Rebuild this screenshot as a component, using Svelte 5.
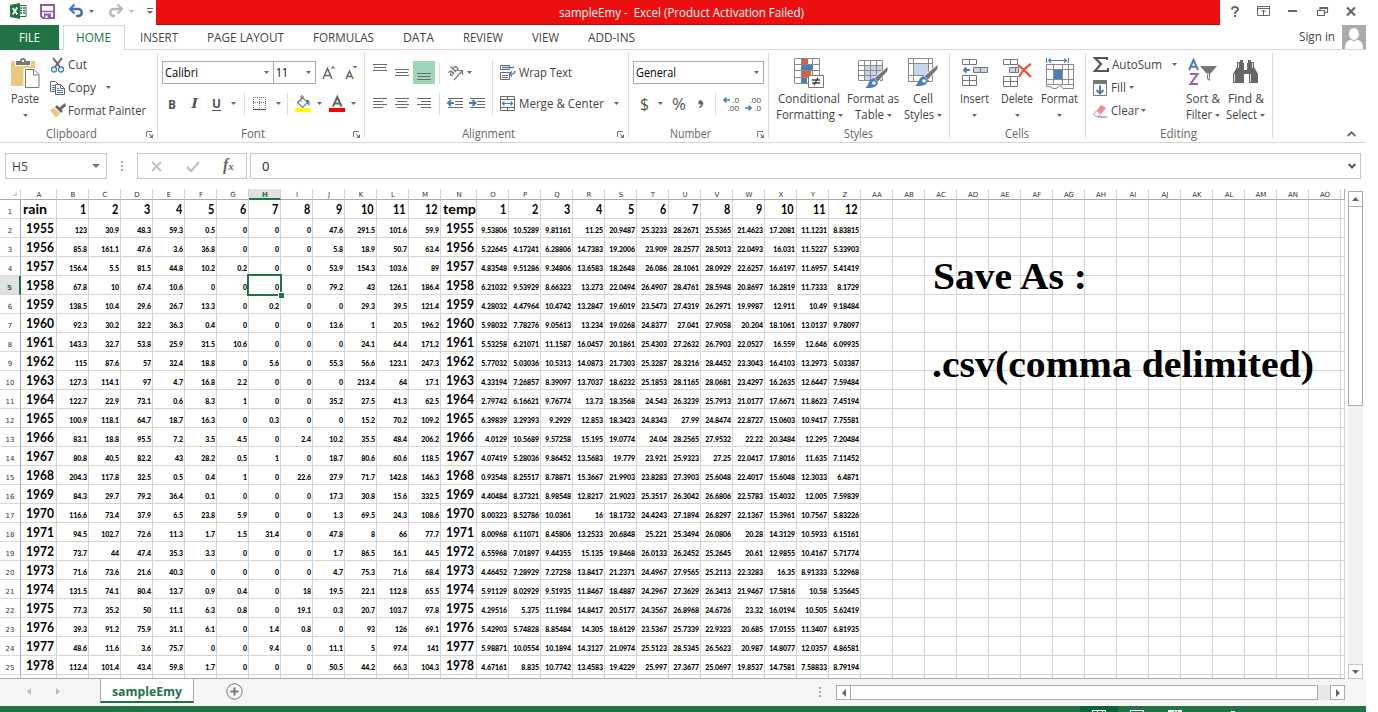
<script>
  // Stretches a text run to the width its slot calls for.
  function fit(el, width) {
    if (!width) return;
    const natural = el.getBoundingClientRect().width;
    el.style.transform = `scaleX(${width / natural})`;
    el.style.marginRight = `${width - natural}px`;
  }

  const G = '#6a6a6a';
  const B = '#4a7ebb';
  const lines = (y, spans) =>
    spans.map(([a, b], i) => `<path d="M${a} ${y + i * 3}.5H${b}" stroke="${G}"/>`).join('');

  const icons = {
    excel: [17, 16, `<path d="M9 2.500h7v11H9" fill="#fff" stroke="#217346"/><path d="M10 5h2m1 0h2M10 7.500h2m1 0h2M10 10h2m1 0h2" stroke="#217346" stroke-width="1.300"/><path d="M0 2l10-2v16L0 14z" fill="#217346"/><path d="M2.700 5l4.600 6.500M7.300 4.500L2.700 11.500" stroke="#fff" stroke-width="1.700"/>`],
    save: [15, 15, `<path d="M1 1h13v13H3l-2-2z" fill="#fff" stroke="#8a5bb0" stroke-width="2"/><path d="M2 7.500h11" stroke="#8a5bb0" stroke-width="1.500"/><path d="M4 9.500h7V14H4z" fill="#8a5bb0"/><path d="M5.500 11.500h2V14h-2z" fill="#fff"/>`],
    undo: [16, 14, `<path d="M2 5h8c5 0 5 7 0 7H8" fill="none" stroke="#41719c" stroke-width="2.400"/><path d="M6.500 .5L2 5l4.500 4.500" fill="none" stroke="#3f7cbf" stroke-width="2.200"/>`],
    redo: [16, 14, `<path d="M14 5H6C1 5 1 12 6 12h1" fill="none" stroke="#b8b8b8" stroke-width="2.400"/><path d="M9.500 .5L14 5 9.500 9.500" fill="none" stroke="#b8b8b8" stroke-width="2.200"/>`],
    custom: [6, 6, `<path d="M0 .5h6" stroke="#666"/><path d="M0 3h6L3 6z" fill="#666"/>`],
    arrow: [5, 3, `<path d="M0 0h5L2.500 3z" fill="#6a6a6a"/>`],
    arrowDim: [5, 3, `<path d="M0 0h5L2.500 3z" fill="#b5b5b5"/>`],
    arrowBig: [8, 4, `<path d="M0 0h8L4 4z" fill="#777"/>`],
    help: [8, 11, `<path d="M1 3.500C1 .3 7 .3 7 3.300 7 5.500 4 5 4 8" fill="none" stroke="#666" stroke-width="2"/><path d="M3 9h2v2H3z" fill="#666"/>`],
    ribbonOpt: [13, 10, `<path d="M.5 .5h12v9H.5zM.5 2.500h12M6.500 9V4M4.500 6l2-2 2 2" fill="none" stroke="#666"/>`],
    min: [9, 2, `<path d="M0 1h9" stroke="#666" stroke-width="2"/>`],
    restore: [11, 9, `<path d="M.5 3.500h7v5h-7zM3 3V.5h7.500v5H8M3 1.500h7" fill="none" stroke="#666" stroke-width="1.200"/>`],
    close: [10, 9, `<path d="M1 .5l8 8M9 .5l-8 8" stroke="#666" stroke-width="2.200"/>`],
    avatar: [24, 24, `<path d="M0 0h24v24H0z" fill="#ababab"/><path d="M3 24c0-7 3-9 6-9h6c3 0 6 2 6 9z" fill="#fff"/><ellipse cx="12" cy="9" rx="5.500" ry="6.500" fill="#fff" stroke="#ababab"/>`],
    paste: [29, 31, `<path d="M0 3h24v25H0z" fill="#ecc780"/><path d="M4 3h16v5H4z" fill="#fff"/><path d="M5 3h4c0-4 6-4 6 0h4v4H5z" fill="#777"/><circle cx="12" cy="3" r="1.200" fill="#fff"/><path d="M14 11.500h9l5 5v13H14z" fill="#fff" stroke="#fff" stroke-width="3"/><path d="M14.500 11.500h8.500l5 5v13H14.500zM22.500 12v5h5" fill="#fff" stroke="#777"/>`],
    cut: [16, 16, `<path d="M3 1l7 9M12 1L5 10" stroke="#666" stroke-width="2"/><circle cx="4" cy="12.500" r="2.500" fill="none" stroke="${B}" stroke-width="1.300"/><circle cx="11" cy="12.500" r="2.500" fill="none" stroke="${B}" stroke-width="1.300"/>`],
    copy: [16, 14, `<path d="M.5 .5h5l3 3v7h-8z" fill="#fff" stroke="#666"/><path d="M2 4.500h3M2 6.500h3M2 8.500h3" stroke="${B}"/><path d="M5.500 3.500h5l4 4v6h-9z" fill="#fff" stroke="#666"/><path d="M10.500 4v3.500h4" fill="none" stroke="#666"/><path d="M7 7.500h2M7 9.500h6M7 11.500h6" stroke="${B}"/>`],
    painter: [17, 15, `<path d="M0 7l4-2 6 5-4 5z" fill="#ecc780"/><path d="M5 4l2-2 6 6-2 2z" fill="#666"/><path d="M9 5l6-5 1 3-5 4z" fill="#666"/>`],
    grow: [14, 16, `<path d="M1 14L5.500 3.500 10 14M2.700 10.500h5.600" fill="none" stroke="#666" stroke-width="1.500"/><path d="M8.500 3.500h5L11 1z" fill="${B}"/>`],
    shrink: [13, 16, `<path d="M1 14L4.500 6 8 14M2.300 11.500h4.400" fill="none" stroke="#666" stroke-width="1.500"/><path d="M7.500 1h5L10 3.500z" fill="${B}"/>`],
    border: [13, 13, `<path d="M.5 0v11M12.500 0v11M6.500 0v11M0 .5h13M0 5.500h13" stroke="#777" stroke-dasharray="1 1"/><path d="M0 12.500h13" stroke="#555" stroke-width="1.200"/>`],
    fill: [17, 17, `<path d="M2.500 7.500l5-5 5 5-5 5z" fill="#fff" stroke="#777" stroke-width="1.200"/><path d="M6 7V1h2v3" fill="none" stroke="#777"/><path d="M11 5c4-1 4 3 3 6l-2-3z" fill="${B}"/><path d="M0 13h16v4H0z" fill="#ff0"/>`],
    fontColor: [16, 17, `<path d="M4 11.500L8.300 2 12.600 11.500M5.500 8.500h5.600" fill="none" stroke="#666" stroke-width="2"/><path d="M0 13h16v4H0z" fill="#f00"/>`],
    aTop: [14, 24, lines(3, [[0, 14], [1, 13], [0, 14]])],
    aMid: [14, 24, lines(8, [[0, 14], [1, 13], [0, 14]])],
    aBot: [22, 23, `<path d="M0 0h22v23H0z" fill="#9fd5b7"/>` + lines(12, [[4, 18], [5, 17], [4, 18]])],
    aLeft: [14, 11, lines(0, [[0, 14], [0, 10], [0, 14], [0, 10]])],
    aCenter: [14, 11, lines(0, [[0, 14], [2, 12], [0, 14], [2, 12]])],
    aRight: [14, 11, lines(0, [[0, 14], [4, 14], [0, 14], [4, 14]])],
    orient: [17, 16, `<text x="0" y="0" transform="translate(4 12) rotate(-45)" font-size="10" font-weight="600" font-family="Open Sans" fill="#666">ab</text><path d="M7 15l8-9M11 5.500h4.500v4.500" fill="none" stroke="#777" stroke-width="1.200"/>`],
    dedent: [16, 11, `<path d="M1 .5h15M8 3.500h8M8 6.500h8M1 9.500h15" stroke="${G}"/><path d="M7 5H2M4 2l-3 3 3 3" fill="none" stroke="${B}" stroke-width="2"/>`],
    indent: [16, 11, `<path d="M1 .5h15M8 3.500h8M8 6.500h8M1 9.500h15" stroke="${G}"/><path d="M0 5h6M3.500 2l3 3-3 3" fill="none" stroke="${B}" stroke-width="2"/>`],
    wrap: [16, 16, `<path d="M.5 .5h9v4h-9zM.5 7.500h9v7h-9zM2 10.500h6M2 12.500h6" fill="none" stroke="${G}"/><path d="M2 2.500h12M15 6c0 3-2 3-5 3M12 6.500L9.500 9l2.500 2.500" fill="none" stroke="${B}" stroke-width="1.400"/>`],
    merge: [15, 15, `<path d="M.5 .5h14v14H.5zM.5 3.500h14M.5 11.500h14M7.500 0v3.500M7.500 11.500V15" fill="none" stroke="${G}"/><path d="M2 7.500h11M4.500 5.500l-2 2 2 2M10.500 5.500l2 2-2 2" fill="none" stroke="${B}" stroke-width="1.200"/>`],
    comma: [6, 8, `<circle cx="2.500" cy="2.500" r="2.200" fill="#666"/><path d="M4.700 2.500C5 5 3.500 6.500 1 7.500" fill="none" stroke="#666" stroke-width="1.300"/>`],
    cond: [30, 30, `<path d="M.5 .5h25v25H.5zM.5 6.500h25M.5 12.500h25M.5 19.500h25M7.500 0v25M18.500 0v25" fill="#fff" stroke="#8a8a8a"/><path d="M8 1h6v5H8zM8 13h9v6H8z" fill="#d9603f"/><path d="M8 7h11v5H8zM8 20h5v5H8z" fill="${B}"/><path d="M14.500 17.500h15v12h-15z" fill="#fff" stroke="#777"/><path d="M18 22h8M18 25h8M24 19.500l-4 8" stroke="#444" stroke-width="1.300"/>`],
    tableFmt: [30, 30, `<path d="M.5 2.500h24v20H.5z" fill="#fff"/><path d="M7 8h18v15H7z" fill="#c5d5ea"/><path d="M.5 2.500h24v20H.5zM.5 7.500h24M.5 12.500h24M.5 17.500h24M6.500 2v20M12.500 2v20M18.500 2v20" fill="none" stroke="#8a8a8a"/><path d="M30 8v5l-10 11-4-4z" fill="#777" stroke="#fff"/><path d="M16 20l4 4c-1 6-6 6-13 6 4-2 3-9 9-10z" fill="${B}"/><circle cx="16" cy="25" r="1.800" fill="#fff"/>`],
    cellFmt: [30, 30, `<path d="M.5 .5h24v23H.5zM.5 5.500h24M.5 17.500h24M5.500 0v23M20.500 0v23" fill="#fff" stroke="#8a8a8a"/><path d="M6 6h14v11H6z" fill="#c5d5ea"/><path d="M30 6v5L20 22l-4-4z" fill="#777" stroke="#fff"/><path d="M16 18l4 4c-1 6-6 6-13 6 4-2 3-9 9-10z" fill="${B}"/><circle cx="16" cy="23" r="1.800" fill="#fff"/>`],
    insert: [28, 30, `<path d="M1.500 1.500h14v5h-14zM8.500 1v5M1.500 17.500h14v10h-14zM1.500 22.500h14M8.500 17v10" fill="#fff" stroke="#777"/><path d="M12.500 9.500h14v5h-14zM19.500 9v6" fill="#c5d5ea" stroke="#777"/><path d="M9 12H3M5.500 9.500L3 12l2.500 2.500" fill="none" stroke="${B}" stroke-width="2"/>`],
    del: [30, 30, `<path d="M1.500 1.500h14v5h-14zM8.500 1v5M1.500 18.500h14v10h-14zM1.500 23.500h14M8.500 18v10" fill="#fff" stroke="#777"/><path d="M7.500 9.500h9v5h-9zM13.500 9v6" fill="#c5d5ea" stroke="#777"/><path d="M16 7c4 3 9 8 13 12M29 6c-5 3-9 7-12 13" fill="none" stroke="#d9603f" stroke-width="2.400"/>`],
    format: [28, 31, `<path d="M.5 0v5M22.500 0v5M2 2.500h19M5 .5l-2.500 2L5 4.500M18 .5l2.500 2-2.500 2" fill="none" stroke="${B}" stroke-width="1.200"/><path d="M.5 6.500h27v24H17l-2-3-5 3H7l-3-2H.5zM.5 11.500h27M.5 21.500h27M.5 26.500h27M7.500 7v20M16.500 7v20M22.500 7v20" fill="#fff" stroke="#8a8a8a"/><path d="M8 12h8v9H8z" fill="${B}"/>`],
    sum: [16, 15, `<path d="M14 3V1H2l6 6-6 7h13v-3" fill="none" stroke="#555" stroke-width="2.200"/>`],
    fillDown: [14, 16, `<path d="M.5 .5h13v15H.5z" fill="#fff" stroke="#777"/><path d="M0 0h14v4H0z" fill="#777"/><path d="M7 5.500v8M3.500 10L7 13.500 10.500 10" fill="none" stroke="${B}" stroke-width="2"/>`],
    clear: [15, 14, `<path d="M8 1l5 3-5 6-4-4z" fill="#e98a9a"/><path d="M3.500 6.500l4 4-2 2H2.500L1 10z" fill="#fff" stroke="#e98a9a"/><path d="M5 13h9" stroke="#777"/>`],
    sort: [30, 30, `<path d="M1 12L5.500 2 10 12M2.700 8.800h5.600" fill="none" stroke="${B}" stroke-width="2"/><path d="M2 16h7.500L2.500 26H10" fill="none" stroke="#9161b5" stroke-width="2"/><path d="M12 8h17l-7 8v7l-3-2v-5z" fill="#777"/><path d="M20 15l1 6" stroke="#fff"/>`],
    find: [28, 28, `<path d="M5 3h3V1h3v3h1v7h3V4h1V1h3v2h3v5l4 7v9h-9v-9h-5v9H1v-9l4-7z" fill="#666"/><path d="M2.500 15v8M18.500 15v8M6.500 4v5M20.500 4v5M12 8.500h4" stroke="#fff" opacity=".8"/>`],
    launch: [7, 7, `<path d="M.5 6V.5H6M3 3l3 3" fill="none" stroke="#777"/><path d="M7 3v4H3z" fill="#777"/>`],
    up: [9, 6, `<path d="M.7 5L4.500 1.300 8.300 5" fill="none" stroke="#666" stroke-width="1.800"/>`],
    down: [8, 6, `<path d="M.7 1L4 4.500 7.300 1" fill="none" stroke="#555" stroke-width="2"/>`],
    dots: [2, 10, `<path d="M0 0h2v2H0zM0 4h2v2H0zM0 8h2v2H0z" fill="#aaa"/>`],
    cancel: [11, 11, `<path d="M1 1l9 9M10 1l-9 9" stroke="#c2c2c2" stroke-width="1.800"/>`],
    ok: [14, 11, `<path d="M1 6l4 4L13 1" fill="none" stroke="#c2c2c2" stroke-width="2.300"/>`],
    triUp: [7, 4, `<path d="M0 4h7L3.500 0z" fill="#666"/>`],
    triDown: [7, 4, `<path d="M0 0h7L3.500 4z" fill="#666"/>`],
    triLeft: [4, 8, `<path d="M4 0v8L0 4z" fill="#666"/>`],
    triRight: [4, 8, `<path d="M0 0v8l4-4z" fill="#666"/>`],
    navLeft: [4, 7, `<path d="M4 0v7L0 3.500z" fill="#bbb"/>`],
    navRight: [4, 7, `<path d="M0 0v7l4-3.500z" fill="#bbb"/>`],
    add: [17, 17, `<circle cx="8.500" cy="8.500" r="7.700" fill="none" stroke="#777"/><path d="M8.500 4.500v8M4.500 8.500h8" stroke="#777" stroke-width="2"/>`],
    corner: [4, 4, `<path d="M4 0v4H0z" fill="#c8c8c8"/>`],
    shiftLeft: [7, 6, `<path d="M7 3H1.500M3.500 .6L1 3l2.500 2.400" fill="none" stroke="${B}" stroke-width="1.600"/>`],
    shiftRight: [7, 6, `<path d="M0 3h5.500M3.500 .6L6 3 3.500 5.400" fill="none" stroke="${B}" stroke-width="1.600"/>`]
  };

  // Slots tile a row from left to right: [slot width, kind, value, text width].
  const quick = [[10], [30, 'i', 'excel'], [28, 'i', 'save'], [21, 'i', 'undo'], [19, 'i', 'arrow'], [21, 'i', 'redo'], [18, 'i', 'arrowDim'], [8, 'i', 'custom']];
  const windowTools = [[11], [26, 'i', 'help'], [31, 'i', 'ribbonOpt'], [29, 'i', 'min'], [29, 'i', 'restore'], [20, 'i', 'close']];
  const tabs = [[15], [67, 't', 'INSERT', 38], [106, 't', 'PAGE LAYOUT', 77], [90, 't', 'FORMULAS', 61], [60, 't', 'DATA', 31], [69, 't', 'REVIEW', 40], [56, 't', 'VIEW', 27], [60, 't', 'ADD-INS', 47]];

  const clip = [
    [[18, 'i', 'cut'], [60, 't', 'Cut', 19]],
    [[18, 'i', 'copy'], [38, 't', 'Copy', 28], [8, 'i', 'arrow']],
    [[18, 'i', 'painter'], [80, 't', 'Format Painter', 78]]
  ];
  const fontRow = [[10], [23, 'b', 'B', 8], [21, 'it', 'I', 7], [19, 'u', 'U', 9], [13, 'i', 'arrow'], [9, 's'], [23, 'i', 'border'], [11, 'i', 'arrow'], [8, 's'], [22, 'i', 'fill'], [12, 'i', 'arrow'], [22, 'i', 'fontColor'], [6, 'i', 'arrow']];
  const alignRows = [
    [[8], [22, 'i', 'aTop'], [18, 'i', 'aMid'], [26, 'i', 'aBot'], [8, 's'], [20, 'i', 'orient'], [25, 'i', 'arrow'], [8, 'st'], [19, 'i', 'wrap'], [60, 't', 'Wrap Text', 53]],
    [[8], [22, 'i', 'aLeft'], [22, 'i', 'aCenter'], [22, 'i', 'aRight'], [8, 's'], [22, 'i', 'dedent'], [23, 'i', 'indent'], [8, 'sb'], [19, 'i', 'merge'], [95, 't', 'Merge & Center', 85], [6, 'i', 'arrow']]
  ];
  const numberRow = [[11], [18, 'big', '$', 9], [14, 'i', 'arrow'], [26, 'big', '%', 14], [17, 'i', 'comma'], [8, 's'], [22, 'dl', 'inc'], [17, 'dr', 'dec']];
  const edit = [
    [[19, 'i', 'sum'], [60, 't', 'AutoSum', 50], [8, 'i', 'arrow']],
    [[18, 'i', 'fillDown'], [18, 't', 'Fill', 15], [8, 'i', 'arrow']],
    [[18, 'i', 'clear'], [30, 't', 'Clear', 28], [8, 'i', 'arrow']]
  ];
  const big = {
    paste: [50, 'paste', 'Paste', 28, '', 0],
    styles: [[72, 'cond', 'Conditional', 62, 'Formatting', 59], [56, 'tableFmt', 'Format as', 52, 'Table', 29], [44, 'cellFmt', 'Cell', 20, 'Styles', 30]],
    cells: [[43, 'insert', 'Insert', 29, '', 0], [42, 'del', 'Delete', 32, '', 0], [43, 'format', 'Format', 37, '', 0]],
    editing: [[43, 'sort', 'Sort &', 34, 'Filter', 26], [43, 'find', 'Find &', 36, 'Select', 31]]
  };

  const letters = 'ABCDEFGHIJKLMNOPQRSTUVWXYZ'.split('');
  const columns = [...letters, ...letters.slice(0, 15).map((l) => 'A' + l)];

  const data = `rain 1 2 3 4 5 6 7 8 9 10 11 12 temp 1 2 3 4 5 6 7 8 9 10 11 12
1955 123 30.9 48.3 59.3 0.5 0 0 0 47.6 291.5 101.6 59.9 1955 9.53806 10.5289 9.81161 11.25 20.9487 25.3233 28.2671 25.5365 21.4623 17.2081 11.1231 8.83815
1956 85.8 161.1 47.6 3.6 36.8 0 0 0 5.8 18.9 50.7 63.4 1956 5.22645 4.17241 6.28806 14.7383 19.2006 23.909 28.2577 28.5013 22.0493 16.031 11.5227 5.33903
1957 156.4 5.5 81.5 44.8 10.2 0.2 0 0 53.9 154.3 103.6 89 1957 4.83548 9.51286 9.34806 13.6583 18.2648 26.086 28.1061 28.0929 22.6257 16.6197 11.6957 5.41419
1958 67.8 10 67.4 10.6 0 0 0 0 79.2 43 126.1 186.4 1958 6.21032 9.53929 8.66323 13.273 22.0494 26.4907 28.4761 28.5948 20.8697 16.2819 11.7333 8.1729
1959 138.5 10.4 29.6 26.7 13.3 0 0.2 0 0 29.3 39.5 121.4 1959 4.28032 4.47964 10.4742 13.2847 19.6019 23.5473 27.4319 26.2971 19.9987 12.911 10.49 9.18484
1960 92.3 30.2 32.2 36.3 0.4 0 0 0 13.6 1 20.5 196.2 1960 5.98032 7.78276 9.05613 13.234 19.0268 24.8377 27.041 27.9058 20.204 18.1061 13.0137 9.78097
1961 143.3 32.7 53.8 25.9 31.5 10.6 0 0 0 24.1 64.4 171.2 1961 5.53258 6.21071 11.1587 16.0457 20.1861 25.4303 27.2632 26.7903 22.0527 16.559 12.646 6.09935
1962 115 87.6 57 32.4 18.8 0 5.6 0 55.3 56.6 123.1 247.3 1962 5.77032 5.03036 10.5313 14.0873 21.7303 25.3287 28.3216 28.4452 23.3043 16.4103 13.2973 5.03387
1963 127.3 114.1 97 4.7 16.8 2.2 0 0 0 213.4 64 17.1 1963 4.33194 7.26857 8.39097 13.7037 18.6232 25.1853 28.1165 28.0681 23.4297 16.2635 12.6447 7.59484
1964 122.7 22.9 73.1 0.6 8.3 1 0 0 35.2 27.5 41.3 62.5 1964 2.79742 6.16621 9.76774 13.73 18.3568 24.543 26.3239 25.7913 21.0177 17.6671 11.8623 7.45194
1965 100.9 118.1 64.7 18.7 16.3 0 0.3 0 0 15.2 70.2 109.2 1965 6.39839 3.29393 9.2929 12.853 18.3423 24.8343 27.99 24.8474 22.8727 15.0603 10.9417 7.75581
1966 83.1 18.8 95.5 7.2 3.5 4.5 0 2.4 10.2 35.5 48.4 206.2 1966 4.0129 10.5689 9.57258 15.195 19.0774 24.04 28.2565 27.9532 22.22 20.3484 12.295 7.20484
1967 80.8 40.5 82.2 43 28.2 0.5 1 0 18.7 80.6 60.6 118.5 1967 4.07419 5.28036 9.86452 13.5683 19.779 23.921 25.9323 27.25 22.0417 17.8016 11.635 7.11452
1968 204.3 117.8 32.5 0.5 0.4 1 0 22.6 27.9 71.7 142.8 146.3 1968 0.93548 8.25517 8.78871 15.3667 21.9903 23.8283 27.3903 25.6048 22.4017 15.6048 12.3033 6.4871
1969 84.3 29.7 79.2 36.4 0.1 0 0 0 17.3 30.8 15.6 332.5 1969 4.40484 8.37321 8.98548 12.8217 21.9023 25.3517 26.3042 26.6806 22.5783 15.4032 12.005 7.59839
1970 116.6 73.4 37.9 6.5 23.8 5.9 0 0 1.3 69.5 24.3 108.6 1970 8.00323 8.52786 10.0361 16 18.1732 24.4243 27.1894 26.8297 22.1367 15.3961 10.7567 5.83226
1971 94.5 102.7 72.6 11.3 1.7 1.5 31.4 0 47.8 8 66 77.7 1971 8.00968 6.11071 8.45806 13.2533 20.6848 25.221 25.3494 26.0806 20.28 14.3129 10.5933 6.15161
1972 73.7 44 47.4 35.3 3.3 0 0 0 1.7 86.5 16.1 44.5 1972 6.55968 7.01897 9.44355 15.135 19.8468 26.0133 26.2452 25.2645 20.61 12.9855 10.4167 5.71774
1973 71.6 73.6 21.6 40.3 0 0 0 0 4.7 75.3 71.6 68.4 1973 4.46452 7.28929 7.27258 13.8417 21.2371 24.4967 27.9565 25.2113 22.3283 16.35 8.91333 5.32968
1974 131.5 74.1 80.4 13.7 0.9 0.4 0 18 19.5 22.1 112.8 65.5 1974 5.91129 8.02929 9.51935 11.8467 18.4887 24.2967 27.3629 26.3413 21.9467 17.5816 10.58 5.35645
1975 77.3 35.2 50 11.1 6.3 0.8 0 19.1 0.3 20.7 103.7 97.8 1975 4.29516 5.375 11.1984 14.8417 20.5177 24.3567 26.8968 24.6726 23.32 16.0194 10.505 5.62419
1976 39.3 91.2 75.9 31.1 6.1 0 1.4 0.8 0 93 126 69.1 1976 5.42903 5.74828 8.85484 14.305 18.6129 23.5367 25.7339 22.9323 20.685 17.0155 11.3407 6.81935
1977 48.6 11.6 3.6 75.7 0 0 9.4 0 11.1 5 97.4 141 1977 5.98871 10.0554 10.1894 14.3127 21.0974 25.5123 28.5345 26.5623 20.987 14.8077 12.0357 4.86581
1978 112.4 101.4 43.4 59.8 1.7 0 0 0 50.5 44.2 66.3 104.3 1978 4.67161 8.835 10.7742 13.4583 19.4229 25.997 27.3677 25.0697 19.8537 14.7581 7.58833 8.79194`;
  const rows = data.split('\n').map((r) => r.split(' '));
  const isYear = (i) => i === 0 || i === 13;
  const largeWidth = (text, r, i) =>
    text === 'rain' ? 24 : text === 'temp' ? 33 : isYear(i) && r > 0 ? 28 : text.length * 6.3;
</script>

{#snippet icon(name)}
  <svg class="icon" width={icons[name][0]} height={icons[name][1]} viewBox="0 0 {icons[name][0]} {icons[name][1]}">{@html icons[name][2]}</svg>
{/snippet}

{#snippet slots(list)}
  {#each list as [w, kind, value, tw]}
    <span class="slot k-{kind ?? 'gap'}" style:width="{w}px">
      {#if kind === 'i'}{@render icon(value)}
      {:else if kind === 'dl'}<span class="dec"><span>{@render icon('shiftLeft')}.0</span><span class="end">.00</span></span>
      {:else if kind === 'dr'}<span class="dec"><span class="end">.00</span><span>{@render icon('shiftRight')}.0</span></span>
      {:else if value}<span class="txt" use:fit={tw}>{value}</span>{/if}
    </span>
  {/each}
{/snippet}

{#snippet bigButton([w, name, line1, w1, line2, w2])}
  <div class="big" style:width="{w}px">
    <div class="pic">{@render icon(name)}</div>
    <div class="line"><span class="txt" use:fit={w1}>{line1}</span></div>
    <div class="line">{#if line2}<span class="txt" use:fit={w2}>{line2}</span>{/if}<span class="caret" class:after={line2}>{@render icon('arrow')}</span></div>
  </div>
{/snippet}

{#snippet label(text, w, launcher)}
  <div class="label"><span class="txt" use:fit={w}>{text}</span>{#if launcher}<span class="launcher">{@render icon('launch')}</span>{/if}</div>
{/snippet}

<div class="window">
  <header class="title">
    <div class="quick">{@render slots(quick)}</div>
    <div class="caption"><span class="txt" use:fit={245}>sampleEmy -&nbsp; Excel (Product Activation Failed)</span></div>
    <div class="tools">{@render slots(windowTools)}</div>
  </header>

  <nav class="tabs">
    <div class="file"><span class="txt" use:fit={21}>FILE</span></div>
    <div class="home"><span class="txt" use:fit={35}>HOME</span></div>
    <div class="others">{@render slots(tabs)}</div>
    <div class="sign"><span class="txt" use:fit={36}>Sign in</span>{@render icon('avatar')}</div>
  </nav>

  <section class="ribbon">
    <div class="group g-clip">
      <div class="body">
        {@render bigButton(big.paste)}
        <div class="stack">{#each clip as row}<div class="row short">{@render slots(row)}</div>{/each}</div>
      </div>
      {@render label('Clipboard', 51, true)}
    </div>
    <div class="group g-font">
      <div class="body rows">
        <div class="row">
          <div class="combo family"><span class="txt" use:fit={33}>Calibri</span>{@render icon('arrow')}</div>
          <div class="combo size"><span class="txt" use:fit={12}>11</span>{@render icon('arrow')}</div>
          <div class="sizer">{@render icon('grow')}{@render icon('shrink')}</div>
        </div>
        <div class="row">{@render slots(fontRow)}</div>
      </div>
      {@render label('Font', 24, true)}
    </div>
    <div class="group g-align">
      <div class="body rows">{#each alignRows as row}<div class="row">{@render slots(row)}</div>{/each}</div>
      {@render label('Alignment', 53, true)}
    </div>
    <div class="group g-number">
      <div class="body rows">
        <div class="row"><div class="combo general"><span class="txt" use:fit={40}>General</span>{@render icon('arrow')}</div></div>
        <div class="row">{@render slots(numberRow)}</div>
      </div>
      {@render label('Number', 41, true)}
    </div>
    <div class="group g-styles">
      <div class="body">{#each big.styles as b}{@render bigButton(b)}{/each}</div>
      {@render label('Styles', 29, false)}
    </div>
    <div class="group g-cells">
      <div class="body">{#each big.cells as b}{@render bigButton(b)}{/each}</div>
      {@render label('Cells', 24, false)}
    </div>
    <div class="group g-edit">
      <div class="body">
        <div class="stack">{#each edit as row}<div class="row short">{@render slots(row)}</div>{/each}</div>
        {#each big.editing as b}{@render bigButton(b)}{/each}
      </div>
      {@render label('Editing', 37, false)}
    </div>
    <div class="collapse">{@render icon('up')}</div>
  </section>

  <section class="formula">
    <div class="box name"><span class="txt" use:fit={16}>H5</span>{@render icon('arrowBig')}</div>
    <div class="grip">{@render icon('dots')}</div>
    <div class="box actions">{@render icon('cancel')}{@render icon('ok')}<span class="fx">f<small>x</small></span></div>
    <div class="box value"><span>0</span>{@render icon('down')}</div>
  </section>

  <main class="sheet">
    <div class="grid">
      <div class="ch corner">{@render icon('corner')}</div>
      {#each columns as c}<div class="ch" class:on={c === 'H'}>{c}</div>{/each}
      <div class="ch last"></div>
      {#each rows as row, r}
        <div class="rh" class:on={r === 4}>{r + 1}</div>
        {#each columns as c, i}
          <div class="cell" class:large={r === 0 || isYear(i)} class:word={r === 0 && isYear(i)}>
            {#if row[i] && (r === 0 || isYear(i))}<span class="txt" use:fit={largeWidth(row[i], r, i)}>{row[i]}</span>{:else}{row[i] ?? ''}{/if}
            {#if r === 4 && c === 'H'}<div class="cursor"></div>{/if}
          </div>
        {/each}
        <div class="cell"></div>
      {/each}
      <div class="rh tail"></div>
      {#each columns as c}<div class="cell tail"></div>{/each}
      <div class="cell tail"></div>
      <div class="note save"><span class="txt" use:fit={154}>Save As :</span></div>
      <div class="note csv"><span class="txt" use:fit={382}>.csv(comma delimited)</span></div>
    </div>
    <div class="vscroll">
      <div class="sb">{@render icon('triUp')}</div>
      <div class="vthumb"></div>
      <div class="vtrack"></div>
      <div class="sb light">{@render icon('triDown')}</div>
    </div>
  </main>

  <footer class="sheets">
    <div class="nav">{@render icon('navLeft')}{@render icon('navRight')}</div>
    <div class="tab"><span class="txt" use:fit={70}>sampleEmy</span></div>
    <div class="plus">{@render icon('add')}</div>
    <div class="hgrip">{@render icon('dots')}</div>
    <div class="hscroll">
      <div class="sb">{@render icon('triLeft')}</div>
      <div class="hthumb"></div>
      <div class="htrack"></div>
      <div class="sb">{@render icon('triRight')}</div>
    </div>
  </footer>
  <div class="status">
    <div class="view"><i></i></div>
    <div class="view plain"><i></i></div>
    <div class="view plain"><i class="solid"></i></div>
    <b></b>
  </div>
</div>

<style>
  :global(body) { margin: 0; background: #fff; overflow: hidden; }
  .window { width: 1366px; height: 712px; display: flex; flex-direction: column; overflow: hidden; font: 12px/16px 'Open Sans', sans-serif; color: #444; }
  .window :global(*) { box-sizing: border-box; }
  .icon { display: block; flex: none; overflow: visible; }
  .txt { display: inline-block; white-space: pre; transform-origin: left center; flex: none; }
  .slot { flex: none; display: flex; align-items: center; height: 100%; white-space: nowrap; }
  .k-b { font-weight: 700; font-size: 13px; color: #555; }
  .k-it { font: italic 700 15px 'Liberation Serif', serif; color: #555; }
  .k-u { font-weight: 700; font-size: 13px; color: #555; }
  .k-u .txt { border-bottom: 1px solid #555; line-height: 13px; }
  .k-big { font-size: 16px; color: #555; }
  .k-s, .k-st, .k-sb { border-left: 1px solid #dcdcdc; height: 22px; }
  .k-st { height: 28px; align-self: flex-end; }
  .k-sb { height: 27px; align-self: flex-start; }
  .dec { display: flex; flex-direction: column; width: 16px; font-size: 8px; line-height: 8px; color: #444; }
  .dec span { display: flex; align-items: center; justify-content: space-between; height: 8px; }
  .dec .end { justify-content: flex-end; }

  .title { height: 25px; display: flex; flex: none; }
  .quick { width: 156px; height: 22px; display: flex; }
  .caption { width: 1064px; height: 25px; background: #eb100f; border-bottom: 1px solid #b80c0c; color: #fff; display: flex; padding: 5px 0 0 403px; }
  .tools { display: flex; height: 22px; }

  .tabs { height: 25px; flex: none; display: flex; border-bottom: 1px solid #d4d4d4; }
  .others { display: flex; height: 24px; padding-top: 1px; }
  .file { width: 59px; height: 25px; background: #217346; color: #fff; padding: 5px 0 0 19px; }
  .home { width: 62px; height: 25px; margin-left: 4px; border: 1px solid #d4d4d4; border-bottom: 0; background: #fff; color: #217346; padding: 4px 0 0 12px; }
  .sign { margin-left: auto; display: flex; align-items: center; gap: 7px; }

  .ribbon { height: 93px; flex: none; display: flex; border-bottom: 1px solid #d4d4d4; }
  .group { flex: none; height: 92px; display: flex; flex-direction: column; border-right: 1px solid; border-image: linear-gradient(transparent 4px, #dcdcdc 4px, #dcdcdc 87px, transparent 87px) 1; }
  .body { height: 76px; display: flex; }
  .rows { flex-direction: column; padding-top: 7px; }
  .row { height: 31px; flex: none; display: flex; align-items: center; }
  .short { height: 23px; }
  .stack { padding-top: 3px; }
  .g-clip { width: 158px; }
  .g-font { width: 207px; }
  .g-align { width: 264px; }
  .g-number { width: 140px; }
  .g-styles { width: 181px; }
  .g-cells { width: 136px; }
  .g-edit { width: 187px; }
  .g-styles .body { padding-left: 4px; }
  .g-cells .body { padding-left: 3px; }
  .g-edit .body { padding-left: 7px; }
  .g-edit .stack { width: 88px; }
  .label { height: 16px; display: flex; justify-content: center; position: relative; color: #666; font-size: 12px; }
  .g-clip .label { padding-right: 14px; }
  .g-font .label { padding-right: 16px; }
  .g-align .label, .g-number .label { padding-right: 16px; }
  .g-cells .label, .g-edit .label, .g-styles .label { padding-right: 1px; }
  .launcher { position: absolute; right: 4px; top: 5px; }
  .big { flex: none; display: flex; flex-direction: column; align-items: center; }
  .pic { height: 34px; margin-top: 7px; padding-bottom: 2px; display: flex; align-items: center; }
  .line { height: 16px; display: flex; align-items: center; }
  .caret.after { margin-left: 3px; }
  .combo { height: 23px; border: 1px solid #ababab; display: flex; align-items: center; justify-content: space-between; padding: 0 4px 0 2px; color: #000; flex: none; }
  .family { width: 112px; margin-left: 4px; }
  .size { width: 43px; margin-left: -1px; }
  .general { width: 131px; margin-left: 4px; }
  .sizer { display: flex; margin-left: 6px; gap: 9px; }
  .collapse { margin-left: auto; align-self: flex-end; padding: 0 10px 5px 0; }

  .formula { height: 46px; flex: none; display: flex; padding: 10px 0 0 5px; }
  .box { height: 26px; border: 1px solid #c6c6c6; display: flex; align-items: center; font-size: 13px; }
  .name { width: 102px; justify-content: space-between; padding: 0 6px 0 6px; }
  .grip { width: 30px; height: 26px; display: flex; align-items: center; padding-left: 14px; }
  .actions { width: 110px; padding-left: 13px; gap: 24px; }
  .fx { font: italic 700 16px/20px 'Liberation Serif', serif; color: #666; margin: -2px 0 0 -1px; }
  .fx small { font-size: 11px; }
  .value { width: 1111px; margin-left: 3px; justify-content: space-between; padding: 0 4px 0 11px; color: #222; }

  .sheet { height: 490px; flex: none; display: flex; }
  .grid { position: relative; width: 1345px; height: 490px; flex: none; display: grid; grid-template-columns: 21px 36px repeat(12, 32px) 36px repeat(27, 32px) 4px; grid-template-rows: 11px repeat(25, 19px) 4px; border-right: 1px solid #ababab; border-bottom: 1px solid #ababab; }
  .ch { border-right: 1px solid #d4d4d4; border-bottom: 1px solid #ababab; font: 7px/12px 'DejaVu Sans', sans-serif; text-align: center; color: #333; height: 11px; padding-left: 1px; }
  .ch.on { background: #e1e1e1; border-bottom: 2px solid #217346; color: #217346; font-weight: 700; }
  .ch.last { border-right: 0; }
  .corner { display: flex; justify-content: flex-end; align-items: center; padding-right: 3px; }
  .rh { border-right: 1px solid #ababab; border-bottom: 1px solid #d9d9d9; font: 7px/24px 'DejaVu Sans', sans-serif; text-align: center; color: #333; overflow: hidden; }
  .rh.on { background: #e1e1e1; border-right: 2px solid #217346; color: #217346; font-weight: 700; }
  .cell { position: relative; border-right: 1px solid #d4d4d4; border-bottom: 1px solid #d4d4d4; font: 900 7px/23px Lato, sans-serif; letter-spacing: -0.05px; text-align: right; color: #000; white-space: nowrap; padding-right: 1px; height: 19px; }
  .cell.large { display: flex; justify-content: flex-end; font-weight: 700; font-size: 13px; line-height: 19px; letter-spacing: 0; padding-right: 2px; }
  .cell.word { justify-content: flex-start; padding-left: 2px; padding-right: 0; }
  .tail { height: 3px; border-bottom: 0; }
  .cursor { position: absolute; z-index: 1; left: -2px; top: -2px; width: 35px; height: 22px; border: 2px solid #217346; }
  .cursor::after { content: ''; position: absolute; right: -4px; bottom: -4px; width: 5px; height: 5px; background: #217346; border-left: 1px solid #fff; border-top: 1px solid #fff; box-sizing: content-box; }
  .note { position: absolute; font: 700 37px/44px 'Palatino Linotype', 'Liberation Serif', serif; color: #000; }
  .save { left: 933px; top: 66px; }
  .csv { left: 932px; top: 154px; }
  .vscroll { width: 15px; margin-left: 3px; padding-top: 2px; display: flex; flex-direction: column; }
  .sb { width: 15px; height: 16px; flex: none; border: 1px solid #ababab; background: #fff; display: flex; align-items: center; justify-content: center; }
  .vthumb { height: 200px; border: 1px solid #ababab; margin-top: -1px; flex: none; }
  .vtrack { flex: 1; background: #f1f1f1; }
  .sb.light { height: 15px; border-color: #c6c6c6; }

  .sheets { height: 27px; flex: none; display: flex; background: #f5f5f5; }
  .nav { width: 100px; display: flex; gap: 25px; padding: 9px 0 0 27px; }
  .tab { width: 94px; height: 24px; background: #fff; border: 1px solid #ababab; border-top: 0; border-bottom: 2px solid #217346; color: #217346; font-weight: 700; font-size: 12px; padding: 5px 0 0 11px; box-shadow: 0 -1px #fff; }
  .plus { padding: 4px 0 0 32px; }
  .hgrip { margin-left: auto; padding-top: 8px; width: 17px; }
  .hscroll { display: flex; margin: 6px 21px 0 0; height: 15px; }
  .hscroll .sb { height: 15px; }
  .hthumb { width: 468px; margin-left: -1px; background: #fff; border: 1px solid #ababab; }
  .htrack { width: 12px; background: #e8e8e8; }
  .status { height: 6px; flex: none; background: #217346; display: flex; padding-left: 1080px; }
  .view { width: 38px; background: #0a6332; padding: 4px 0 0 12px; }
  .view.plain { background: none; }
  .view i { display: block; width: 14px; height: 3px; border: 1px solid #fff; border-bottom: 0; background: repeating-linear-gradient(90deg, transparent 0 4px, #fff 4px 5px); }
  .view.plain i { background: none; }
  .view.plain i.solid { background: linear-gradient(90deg, #e8f2ec 5px, #217346 5px 6px, #e8f2ec 6px 8px, #217346 8px 9px, #e8f2ec 9px); }
  .status b { width: 4px; height: 1px; background: #fff; margin: 5px 0 0 37px; }
</style>
